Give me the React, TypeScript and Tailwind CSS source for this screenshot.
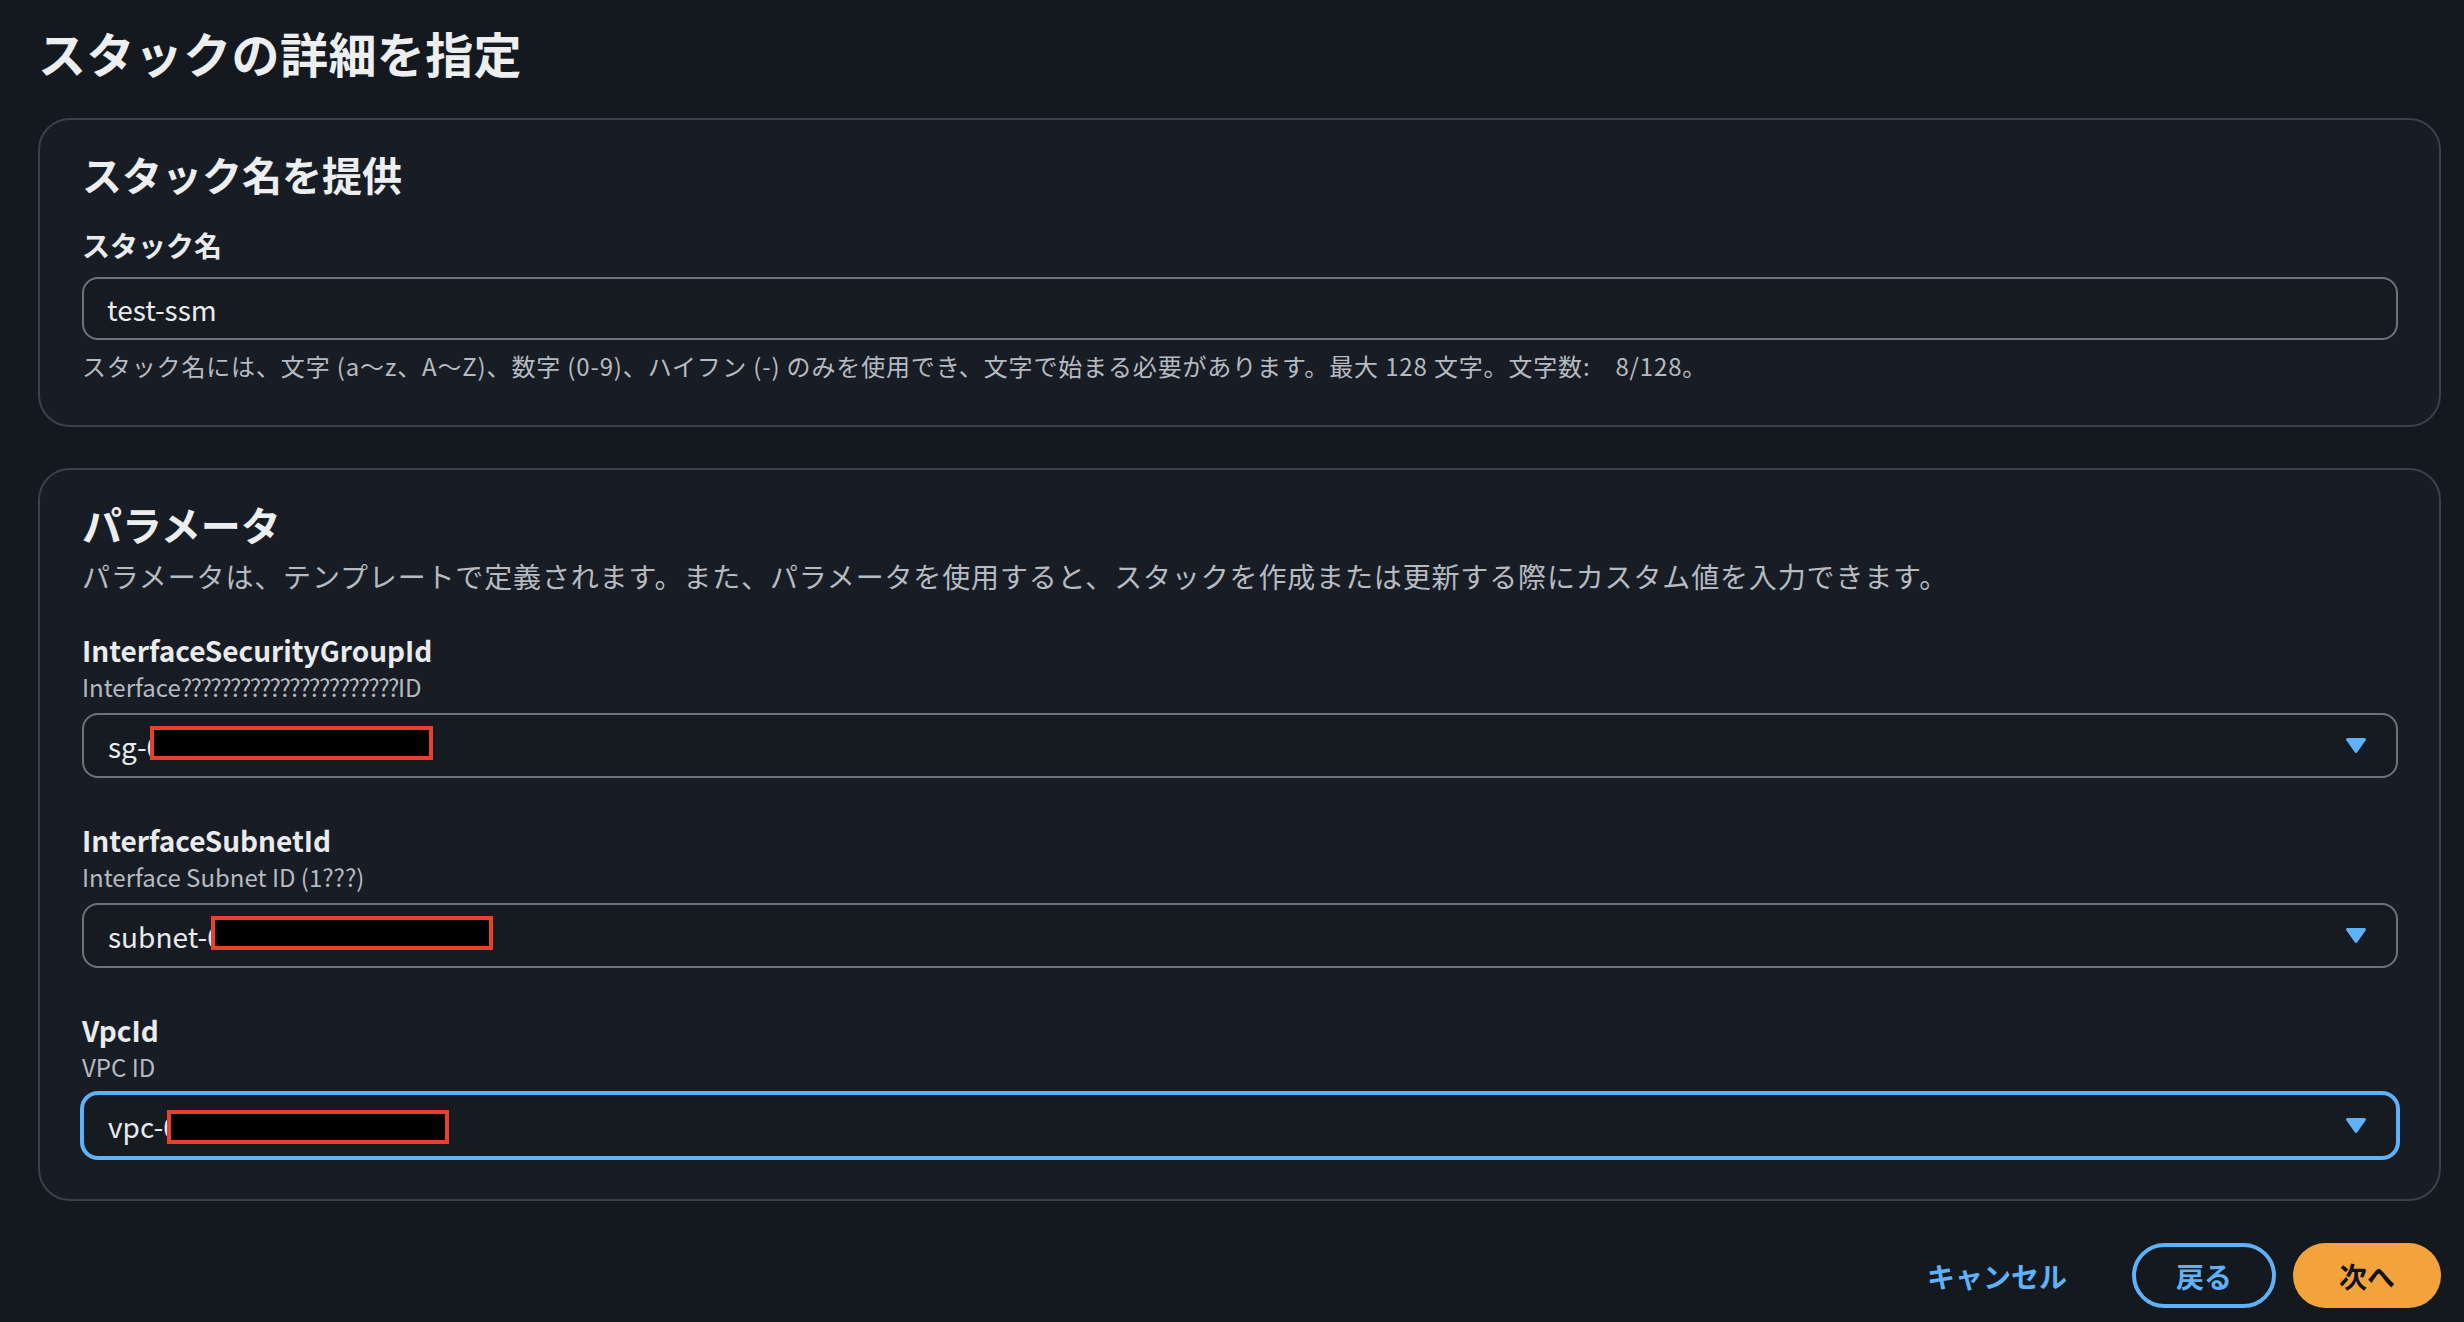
import React from "react"

const fields = [
  {
    name: "InterfaceSecurityGroupId",
    description: (
      <>
        Interface<span className="tracking-[-1.5px]">{"?".repeat(22)}</span>ID
      </>
    ),
    value: "sg-0",
    redact: "left-[66px] top-[11px] w-[283px]",
    focused: false,
  },
  {
    name: "InterfaceSubnetId",
    description: <>Interface Subnet ID (1???)</>,
    value: "subnet-0",
    redact: "left-[127px] top-[11px] w-[282px]",
    focused: false,
  },
  {
    name: "VpcId",
    description: <>VPC ID</>,
    value: "vpc-0",
    redact: "left-[83px] top-[15px] w-[282px]",
    focused: true,
  },
]

function CaretDown() {
  return (
    <svg width="22" height="17" viewBox="0 0 22 17" className="shrink-0">
      <path
        d="M2.5 2.5 L19.5 2.5 L11 14.5 Z"
        fill="#5fb2f7"
        stroke="#5fb2f7"
        strokeWidth="3"
        strokeLinejoin="round"
      />
    </svg>
  )
}

function SelectField({ field }: { field: (typeof fields)[number] }) {
  return (
    <div className="mt-[44px] first:mt-[38px]">
      <div className="text-[28px] leading-[36px] font-bold text-[#e9ebed]">{field.name}</div>
      <div className="mt-[3px] text-[24px] leading-[32px] text-[#b6bbc2]">{field.description}</div>
      <div
        className={`relative mt-[10px] flex h-[65px] items-center justify-between rounded-[16px] border-2 bg-[#161b22] pl-[24px] pr-[29px] ${
          field.focused ? "border-[#5fb2f7] shadow-[0_0_0_2px_#5fb2f7]" : "border-[#6e737b]"
        }`}
      >
        <span className="text-[28px] leading-[36px] text-[#e9ebed]">{field.value}</span>
        <span className={`absolute h-[34px] border-[4px] border-[#e8412a] bg-black ${field.redact}`} />
        <CaretDown />
      </div>
    </div>
  )
}

export default function App() {
  return (
    <div className="min-h-screen bg-[#14191f] pl-[38px] pr-[23px] pt-[23px] pb-[14px] font-['Noto_Sans_CJK_JP','Noto_Sans',sans-serif]">
      <h1 className="text-[48px] leading-[58px] font-bold tracking-[0.4px] text-[#eceef0]">スタックの詳細を指定</h1>

      <section className="mt-[37px] rounded-[32px] border-2 border-[#3b4049] bg-[#181d25] pl-[42px] pr-[41px] pt-[30px] pb-[43px]">
        <h2 className="text-[40px] leading-[48px] font-bold text-[#eceef0]">スタック名を提供</h2>
        <div className="mt-[29px] text-[28px] leading-[36px] font-bold text-[#e9ebed]">スタック名</div>
        <div className="mt-[14px] flex h-[63px] items-center rounded-[16px] border-2 border-[#6e737b] bg-[#161b22] pl-[23px]">
          <span className="text-[28px] leading-[36px] text-[#e9ebed]">test-ssm</span>
        </div>
        <p className="mt-[10px] text-[24px] leading-[32px] tracking-[0.85px] text-[#b6bbc2]">
          スタック名には、文字 (a〜z、A〜Z)、数字 (0-9)、ハイフン (-) のみを使用でき、文字で始まる必要があります。最大 128 文字。文字数:{"\u00a0\u00a0\u00a0\u00a0"}8/128。
        </p>
      </section>

      <section className="mt-[41px] rounded-[32px] border-2 border-[#3b4049] bg-[#181d25] pl-[42px] pr-[41px] pt-[30px] pb-[41px]">
        <h2 className="text-[40px] leading-[48px] font-bold text-[#eceef0]">パラメータ</h2>
        <p className="mt-[10px] text-[28px] leading-[36px] tracking-[0.85px] text-[#b6bbc2]">
          パラメータは、テンプレートで定義されます。また、パラメータを使用すると、スタックを作成または更新する際にカスタム値を入力できます。
        </p>
        <div>
          {fields.map((field) => (
            <SelectField key={field.name} field={field} />
          ))}
        </div>
      </section>

      <div className="mt-[42px] flex items-center justify-end gap-[17px]">
        <button className="h-[65px] pl-[44px] pr-[48px] text-[28px] leading-[36px] font-bold text-[#5fb2f7]">キャンセル</button>
        <button className="h-[65px] rounded-full border-[4px] border-[#5fb2f7] px-[40px] text-[28px] leading-[36px] font-bold text-[#5fb2f7]">
          戻る
        </button>
        <button className="h-[65px] rounded-full bg-[#f4a33c] px-[46px] text-[28px] leading-[36px] font-bold text-[#0f141a]">
          次へ
        </button>
      </div>
    </div>
  )
}
